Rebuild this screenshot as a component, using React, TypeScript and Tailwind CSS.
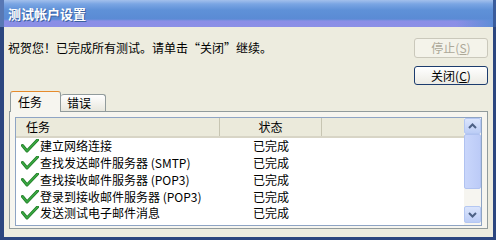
import React from "react";

const FONT = { fontFamily: '"Noto Sans CJK SC", "Liberation Sans", sans-serif' };

const tasks = [
  "建立网络连接",
  "查找发送邮件服务器 (SMTP)",
  "查找接收邮件服务器 (POP3)",
  "登录到接收邮件服务器 (POP3)",
  "发送测试电子邮件消息",
];

function Check() {
  return (
    <svg width="18" height="14" viewBox="0 0 18 14" className="shrink-0">
      <path
        d="M1.5 6.5 L6 12 L16.5 1"
        fill="none"
        stroke="#1f7a24"
        strokeWidth="3"
        strokeLinecap="round"
        strokeLinejoin="round"
      />
      <path
        d="M1.5 6.5 L6 12 L16.5 1"
        fill="none"
        stroke="#3aa843"
        strokeWidth="1.6"
        strokeLinecap="round"
        strokeLinejoin="round"
      />
    </svg>
  );
}

function Arrow({ up }: { up?: boolean }) {
  return (
    <div className="flex h-full w-full items-center justify-center rounded-[2px] border border-[#b4c7f2] bg-[linear-gradient(to_bottom,#dbe5fc,#bccdf6)]">
      <svg width="9" height="6" viewBox="0 0 9 6">
        <path
          d={up ? "M1 5 L4.5 1.5 L8 5" : "M1 1 L4.5 4.5 L8 1"}
          fill="none"
          stroke="#4d6185"
          strokeWidth="2"
        />
      </svg>
    </div>
  );
}

export default function App() {
  return (
    <div className="h-[246px] w-[499px] overflow-hidden bg-white text-[12px] text-black" style={FONT}>
      <div className="flex h-[240px] w-[496px] flex-col">
        {/* title bar */}
        <div className="relative h-[27px] shrink-0 bg-[linear-gradient(to_bottom,#a3c0ec_0px,#7aa5e3_4px,#5f91d8_10px,#5a8bd4_19px,#8a8ee6_21px,#8b8fe6_27px)]">
          <div className="absolute bottom-0 right-0 h-[8px] w-[40px] bg-[linear-gradient(to_right,transparent,#5b8dd6)]" />
          <div className="absolute inset-y-0 right-0 w-[3px] bg-[#3a5c9c]" />
          <div className="absolute inset-y-0 left-0 w-[4px] bg-[#5878b4]" />
          <div className="relative pl-[8px] pt-[7px] text-[13px] font-bold leading-[14px] text-white [text-shadow:1px_1px_0_#3b5f9e]">
            测试帐户设置
          </div>
        </div>

        {/* body */}
        <div className="flex flex-1 flex-col border-b-[3px] border-l-[4px] border-r-[3px] border-[#2c467f] bg-[#edecdf]">
          <div className="mt-[11px] flex items-center">
            <div className="flex-1 pl-[4px] leading-[14px]">祝贺您！已完成所有测试。请单击“关闭”继续。</div>
            <div className="mr-[5px] flex h-[20px] w-[74px] items-center justify-center rounded-[3px] border border-[#cac8bb] bg-[#f4f3ea] text-[#aca899]">
              停止(<span className="underline">S</span>)
            </div>
          </div>
          <div className="mt-[8px] flex justify-end">
            <div className="mr-[5px] flex h-[19px] w-[74px] items-center justify-center rounded-[3px] border border-[#1c3c6e] bg-[linear-gradient(to_bottom,#ffffff,#ecebe4)]">
              关闭(<span className="underline">C</span>)
            </div>
          </div>

          {/* tabs */}
          <div className="mt-[6px] flex items-end pl-[6px]">
            <div className="relative z-10 -mb-px flex h-[21px] w-[51px] items-center rounded-t-[3px] border border-b-0 border-[#919b9c] border-t-[#e68b2c] bg-[#f6f5ef] pl-[7px]">
              任务
            </div>
            <div className="flex h-[17px] w-[45px] items-center rounded-t-[3px] border border-b-0 border-l-0 border-[#919b9c] bg-[linear-gradient(to_bottom,#ffffff,#e8e7dd)] pl-[6px]">
              错误
            </div>
          </div>
          <div className="mb-[8px] ml-[5px] mr-[5px] flex flex-1 flex-col border border-[#919b9c] bg-[#f6f5ef] px-[5px] pb-[2px] pt-[5px]">
            {/* list view */}
            <div className="flex flex-1 border border-[#8ea4c4] bg-white">
              <div className="flex flex-1 flex-col">
                <div className="flex h-[20px] border-b-2 border-[#d8d5c6] bg-[#ebeadb]">
                  <div className="flex w-[204px] items-center border-r border-[#c7c5b2] pl-[10px]">任务</div>
                  <div className="flex w-[102px] items-center justify-center border-r border-[#c7c5b2]">状态</div>
                  <div className="flex-1" />
                </div>
                {tasks.map((t) => (
                  <div key={t} className="flex h-[16.75px] items-center">
                    <div className="flex w-[204px] items-center gap-[1px] pl-[5px]">
                      <Check />
                      <span className="whitespace-nowrap leading-[14px]">{t}</span>
                    </div>
                    <div className="w-[102px] text-center leading-[14px]">已完成</div>
                  </div>
                ))}
              </div>
              {/* scrollbar */}
              <div className="flex w-[17px] flex-col bg-[#f6f5f0] pb-[2px]">
                <div className="h-[16px]">
                  <Arrow up />
                </div>
                <div className="h-[55px] rounded-[2px] border border-[#b0c2f0] bg-[linear-gradient(to_right,#c9d6fb,#bccbf7)]" />
                <div className="flex-1" />
                <div className="h-[17px]">
                  <Arrow />
                </div>
              </div>
            </div>
          </div>
        </div>
      </div>
    </div>
  );
}
